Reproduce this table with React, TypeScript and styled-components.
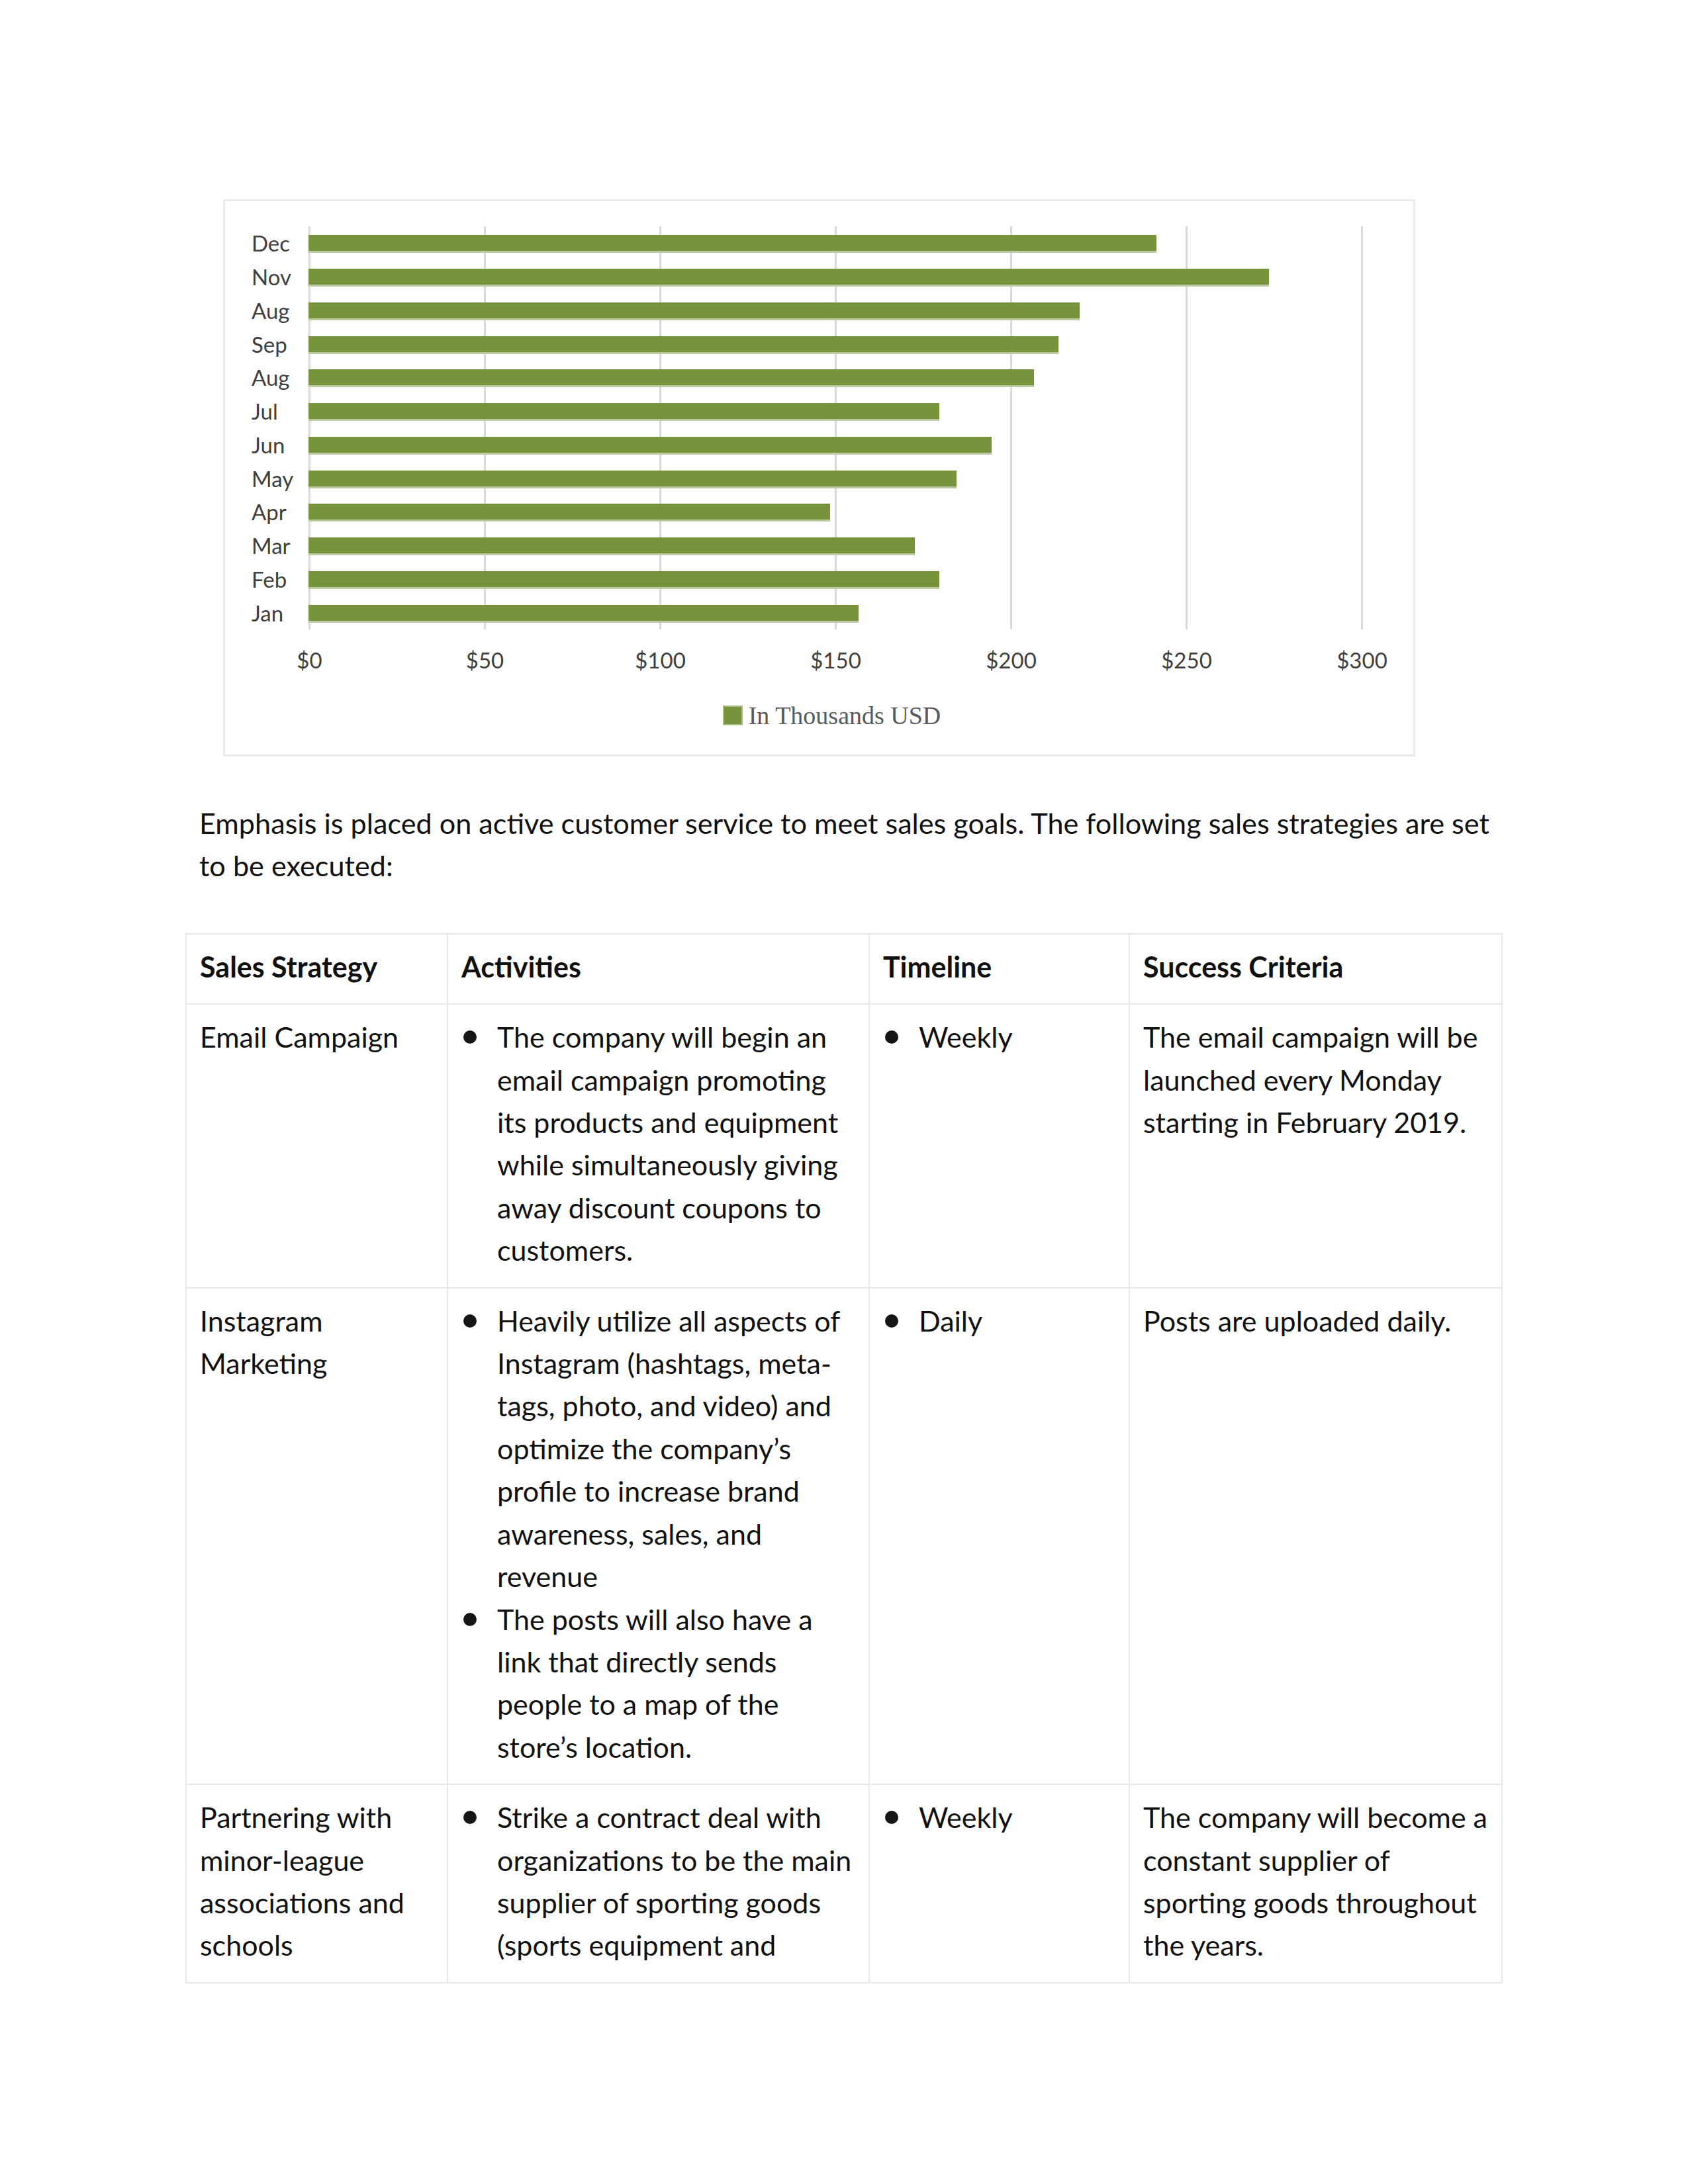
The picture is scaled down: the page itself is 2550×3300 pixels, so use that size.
import React from "react";
import styled, { createGlobalStyle } from "styled-components";

const GlobalStyle = createGlobalStyle`
  html, body {
    margin: 0;
    padding: 0;
    background: #ffffff;
  }
  body {
    font-family: Lato, "Open Sans", sans-serif;
    color: #111111;
  }
`;

type MonthSale = { month: string; value: number };

// top to bottom as drawn in the chart
const sales: MonthSale[] = [
  { month: "Dec", value: 241 },
  { month: "Nov", value: 273 },
  { month: "Aug", value: 219 },
  { month: "Sep", value: 213 },
  { month: "Aug", value: 206 },
  { month: "Jul", value: 179 },
  { month: "Jun", value: 194 },
  { month: "May", value: 184 },
  { month: "Apr", value: 148 },
  { month: "Mar", value: 172 },
  { month: "Feb", value: 179 },
  { month: "Jan", value: 156 },
];

const ticks = ["$0", "$50", "$100", "$150", "$200", "$250", "$300"];
const STEP = 265;
const MAX = 300;
const PLOT_WIDTH = STEP * 6;

type Row = {
  strategy: string[];
  activities: string[][];
  timeline: string;
  criteria: string[];
};

const rows: Row[] = [
  {
    strategy: ["Email Campaign"],
    activities: [
      [
        "The company will begin an",
        "email campaign promoting",
        "its products and equipment",
        "while simultaneously giving",
        "away discount coupons to",
        "customers.",
      ],
    ],
    timeline: "Weekly",
    criteria: [
      "The email campaign will be",
      "launched every Monday",
      "starting in February 2019.",
    ],
  },
  {
    strategy: ["Instagram", "Marketing"],
    activities: [
      [
        "Heavily utilize all aspects of",
        "Instagram (hashtags, meta-",
        "tags, photo, and video) and",
        "optimize the company\u2019s",
        "profile to increase brand",
        "awareness, sales, and",
        "revenue",
      ],
      [
        "The posts will also have a",
        "link that directly sends",
        "people to a map of the",
        "store\u2019s location.",
      ],
    ],
    timeline: "Daily",
    criteria: ["Posts are uploaded daily."],
  },
  {
    strategy: ["Partnering with", "minor-league", "associations and", "schools"],
    activities: [
      [
        "Strike a contract deal with",
        "organizations to be the main",
        "supplier of sporting goods",
        "(sports equipment and",
      ],
    ],
    timeline: "Weekly",
    criteria: [
      "The company will become a",
      "constant supplier of",
      "sporting goods throughout",
      "the years.",
    ],
  },
];

const Lines = ({ lines }: { lines: string[] }) => (
  <>
    {lines.map((line, i) => (
      <React.Fragment key={i}>
        {line}
        {i < lines.length - 1 && <br />}
      </React.Fragment>
    ))}
  </>
);

const BulletList = ({ items }: { items: string[][] }) => (
  <List>
    {items.map((lines, i) => (
      <Item key={i}>
        <Mark>
          <Dot />
        </Mark>
        <span>
          <Lines lines={lines} />
        </span>
      </Item>
    ))}
  </List>
);

const SalesChart = () => (
  <ChartBox>
    <PlotRow>
      <CategoryAxis>
        {sales.map((s, i) => (
          <Category key={i}>{s.month}</Category>
        ))}
      </CategoryAxis>
      <PlotArea>
        {sales.map((s, i) => (
          <Band key={i}>
            <Bar style={{ width: `${(s.value / MAX) * PLOT_WIDTH + 4}px` }} />
          </Band>
        ))}
      </PlotArea>
    </PlotRow>
    <ValueAxis>
      {ticks.map((t) => (
        <Tick key={t}>{t}</Tick>
      ))}
    </ValueAxis>
    <Legend>
      <Swatch />
      <LegendText>In Thousands USD</LegendText>
    </Legend>
  </ChartBox>
);

export default function App() {
  return (
    <Page>
      <GlobalStyle />
      <SalesChart />
      <Paragraph>
        Emphasis is placed on active customer service to meet sales goals. The following sales strategies are set
        <br />
        to be executed:
      </Paragraph>
      <Table>
        <colgroup>
          <col style={{ width: 395 }} />
          <col style={{ width: 637 }} />
          <col style={{ width: 393 }} />
          <col style={{ width: 563 }} />
        </colgroup>
        <thead>
          <tr>
            <HeadCell>Sales Strategy</HeadCell>
            <HeadCell>Activities</HeadCell>
            <HeadCell>Timeline</HeadCell>
            <HeadCell>Success Criteria</HeadCell>
          </tr>
        </thead>
        <tbody>
          {rows.map((r, i) => (
            <tr key={i}>
              <Cell>
                <Lines lines={r.strategy} />
              </Cell>
              <Cell>
                <BulletList items={r.activities} />
              </Cell>
              <Cell>
                <BulletList items={[[r.timeline]]} />
              </Cell>
              <Cell>
                <Lines lines={r.criteria} />
              </Cell>
            </tr>
          ))}
        </tbody>
      </Table>
    </Page>
  );
}

const Page = styled.div`
  width: 2550px;
  min-height: 3300px;
  padding-top: 301px;
  box-sizing: border-box;
  background: #ffffff;
`;

const ChartBox = styled.div`
  margin-left: 337px;
  width: 1801px;
  height: 842px;
  box-sizing: border-box;
  border: 3px solid #ebebeb;
  padding: 38px 0 0 40px;
  display: flex;
  flex-direction: column;
`;

const PlotRow = styled.div`
  display: flex;
  height: 609px;
`;

const CategoryAxis = styled.div`
  width: 86px;
  display: grid;
  grid-template-rows: repeat(12, 1fr);
`;

const Category = styled.div`
  display: flex;
  align-items: center;
  font-family: Lato, sans-serif;
  font-size: 33px;
  color: #404040;
`;

const PlotArea = styled.div`
  width: ${PLOT_WIDTH + 3}px;
  display: grid;
  grid-template-rows: repeat(12, 1fr);
  background: repeating-linear-gradient(
    to right,
    #d9d9d9 0 3px,
    transparent 3px ${STEP}px
  );
`;

const Band = styled.div`
  display: flex;
  align-items: center;
`;

const Bar = styled.div`
  height: 24px;
  background: #77933c;
  box-shadow: 0 3px 0 #bccaa3;
`;

const ValueAxis = styled.div`
  display: grid;
  grid-template-columns: repeat(7, ${STEP}px);
  margin-left: -45px;
  margin-top: 24px;
`;

const Tick = styled.div`
  text-align: center;
  line-height: 44px;
  font-family: Lato, sans-serif;
  font-size: 33px;
  color: #404040;
`;

const Legend = styled.div`
  display: flex;
  align-items: center;
  justify-content: center;
  gap: 9px;
  margin-left: 80px;
  width: ${PLOT_WIDTH + 3}px;
  margin-top: 40px;
  height: 44px;
`;

const Swatch = styled.div`
  width: 30px;
  height: 30px;
  box-sizing: border-box;
  background: #77933c;
  border: 2px solid #a9bc84;
`;

const LegendText = styled.span`
  font-family: "Liberation Serif", serif;
  font-size: 38px;
  color: #595959;
`;

const Paragraph = styled.p`
  margin: 68px 0 0 301px;
  font-family: Lato, sans-serif;
  font-size: 43.2px;
  line-height: 64.4px;
  white-space: nowrap;
  color: #111111;
`;

const Table = styled.table`
  margin: 70px 0 0 280px;
  border-collapse: collapse;
  table-layout: fixed;
  width: 1990px;
`;

const Cell = styled.td`
  border: 2px solid #e8e8e8;
  padding: 17px 20px 23px 20px;
  vertical-align: top;
  font-family: Lato, sans-serif;
  font-size: 43px;
  line-height: 64.4px;
  white-space: nowrap;
  color: #111111;
`;

const HeadCell = styled(Cell).attrs({ as: "th" })`
  font-weight: 700;
  text-align: left;
`;

const List = styled.ul`
  margin: 0;
  padding: 0 0 0 3px;
  list-style: none;
`;

const Item = styled.li`
  display: flex;
  align-items: flex-start;
`;

const Mark = styled.span`
  flex: 0 0 51px;
  height: 64.4px;
  display: flex;
  align-items: center;
`;

const Dot = styled.span`
  width: 20px;
  height: 20px;
  border-radius: 50%;
  background: #151515;
`;
